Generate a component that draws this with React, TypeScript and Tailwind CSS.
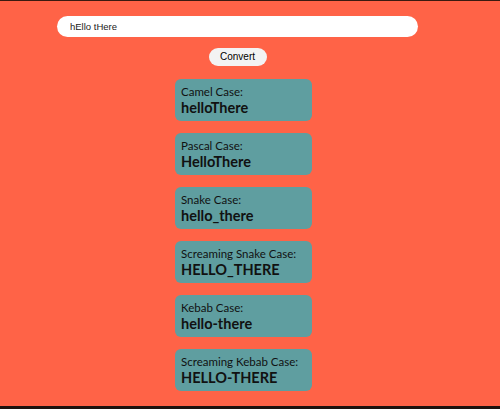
import React, { useState } from "react";

const cases = [
  { label: "Camel Case:", value: "helloThere" },
  { label: "Pascal Case:", value: "HelloThere" },
  { label: "Snake Case:", value: "hello_there" },
  { label: "Screaming Snake Case:", value: "HELLO_THERE" },
  { label: "Kebab Case:", value: "hello-there" },
  { label: "Screaming Kebab Case:", value: "HELLO-THERE" },
];

function CaseCard({ label, value }: { label: string; value: string }) {
  return (
    <div className="w-[137px] h-[42px] bg-[#5f9ea0] rounded-[6px] px-[6px] pt-[6px] text-[#111]">
      <div className="text-[11.5px] leading-[14px]">{label}</div>
      <div className="text-[14.5px] leading-[17px] font-bold">{value}</div>
    </div>
  );
}

export default function App() {
  const [text, setText] = useState("hEllo tHere");

  return (
    <div
      className="w-[500px] h-[409px] bg-[#ff6347] border-t border-b-[3px] border-t-[#3a1a10] border-b-[#1e120e] flex flex-col"
      style={{ fontFamily: "Lato, 'Open Sans', sans-serif" }}
    >
      <div className="w-[475px] flex flex-col items-center pt-[15px]">
        <input
          value={text}
          onChange={(e) => setText(e.target.value)}
          className="w-[361px] h-[21px] bg-white rounded-full px-[13px] text-[9.5px] text-[#222] outline-none"
          style={{ fontFamily: "'Liberation Sans', Arial, sans-serif" }}
        />
        <button
          className="mt-[11px] w-[58px] h-[18px] bg-[#f3f3f3] rounded-full text-[10px] text-black leading-none"
          style={{ fontFamily: "'Liberation Sans', Arial, sans-serif" }}
        >
          Convert
        </button>
        <div className="flex flex-col gap-[12px] mt-[13px] pl-[12px]">
          {cases.map((c) => (
            <CaseCard key={c.label} label={c.label} value={c.value} />
          ))}
        </div>
      </div>
    </div>
  );
}
